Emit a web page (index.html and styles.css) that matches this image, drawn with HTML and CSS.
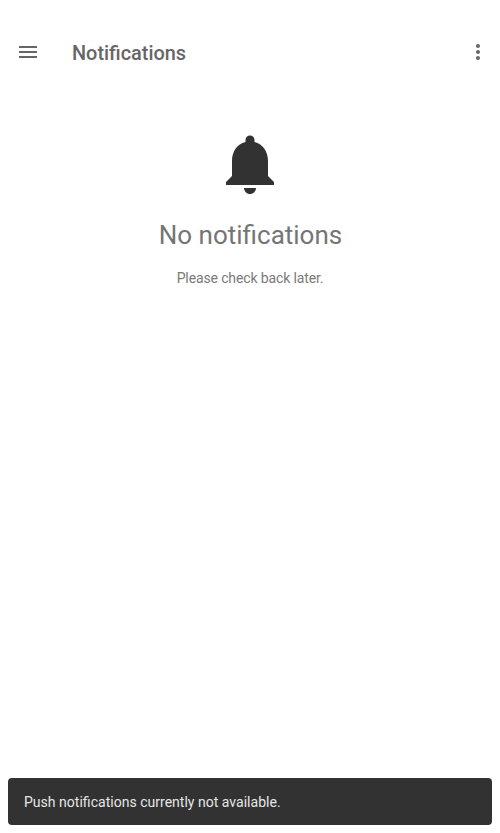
FILE: index.html
```html
<!DOCTYPE html>
<html lang="en">
<head>
<meta charset="utf-8">
<title>Notifications</title>
<link rel="stylesheet" href="styles.css">
</head>
<body>
<header class="toolbar">
  <svg class="icon" viewBox="0 0 24 24"><path d="M3 18h18v-2H3v2zm0-5h18v-2H3v2zm0-7v2h18V6H3z"/></svg>
  <h1 class="title">Notifications</h1>
  <svg class="icon more" viewBox="0 0 24 24"><path d="M12 8c1.1 0 2-.9 2-2s-.9-2-2-2-2 .9-2 2 .9 2 2 2zm0 2c-1.1 0-2 .9-2 2s.9 2 2 2 2-.9 2-2-.9-2-2-2zm0 6c-1.1 0-2 .9-2 2s.9 2 2 2 2-.9 2-2-.9-2-2-2z"/></svg>
</header>
<main class="empty">
  <svg class="bell" viewBox="0 0 24 24"><path d="M12 22c1.1 0 2-.9 2-2h-4c0 1.1.89 2 2 2zm6-6v-5c0-3.07-1.64-5.64-4.5-6.32V4c0-.83-.67-1.5-1.5-1.5s-1.5.67-1.5 1.5v.68C7.63 5.36 6 7.92 6 11v5l-2 2v1h16v-1l-2-2z"/></svg>
  <h2 class="heading">No notifications</h2>
  <p class="message">Please check back later.</p>
</main>
<div class="snackbar">Push notifications currently not available.</div>
</body>
</html>
```
FILE: styles.css
```css
* {
  box-sizing: border-box;
}

body {
  display: flex;
  flex-direction: column;
  height: 833px;
  margin: 0;
  padding: 24px 8px 8px;
  background: #fff;
  color: #757575;
  font-family: Roboto, sans-serif;
}

.toolbar {
  display: flex;
  align-items: center;
  height: 56px;
  padding: 0 2px 0 8px;
}

.icon {
  width: 24px;
  height: 24px;
  fill: #666;
}

.title {
  margin: 4px 0 0 32px;
  color: #666;
  font-size: 19.9px;
  font-weight: 500;
  line-height: 24px;
}

.more {
  margin-left: auto;
}

.empty {
  display: flex;
  flex: 1;
  flex-direction: column;
  align-items: center;
  padding-top: 48px;
}

.bell {
  width: 72px;
  height: 72px;
  fill: #323232;
}

.heading {
  margin: 19px 0 0;
  padding-left: 1px;
  font-size: 26px;
  font-weight: 400;
  line-height: 32px;
}

.message {
  margin: 17px 0 0;
  color: #7a7a7a;
  font-size: 14px;
  letter-spacing: -0.13px;
  line-height: 20px;
}

.snackbar {
  height: 47px;
  padding: 0 16px;
  border-radius: 4px;
  background: #323232;
  color: #e6e6e6;
  font-size: 14.05px;
  line-height: 48px;
}
```
